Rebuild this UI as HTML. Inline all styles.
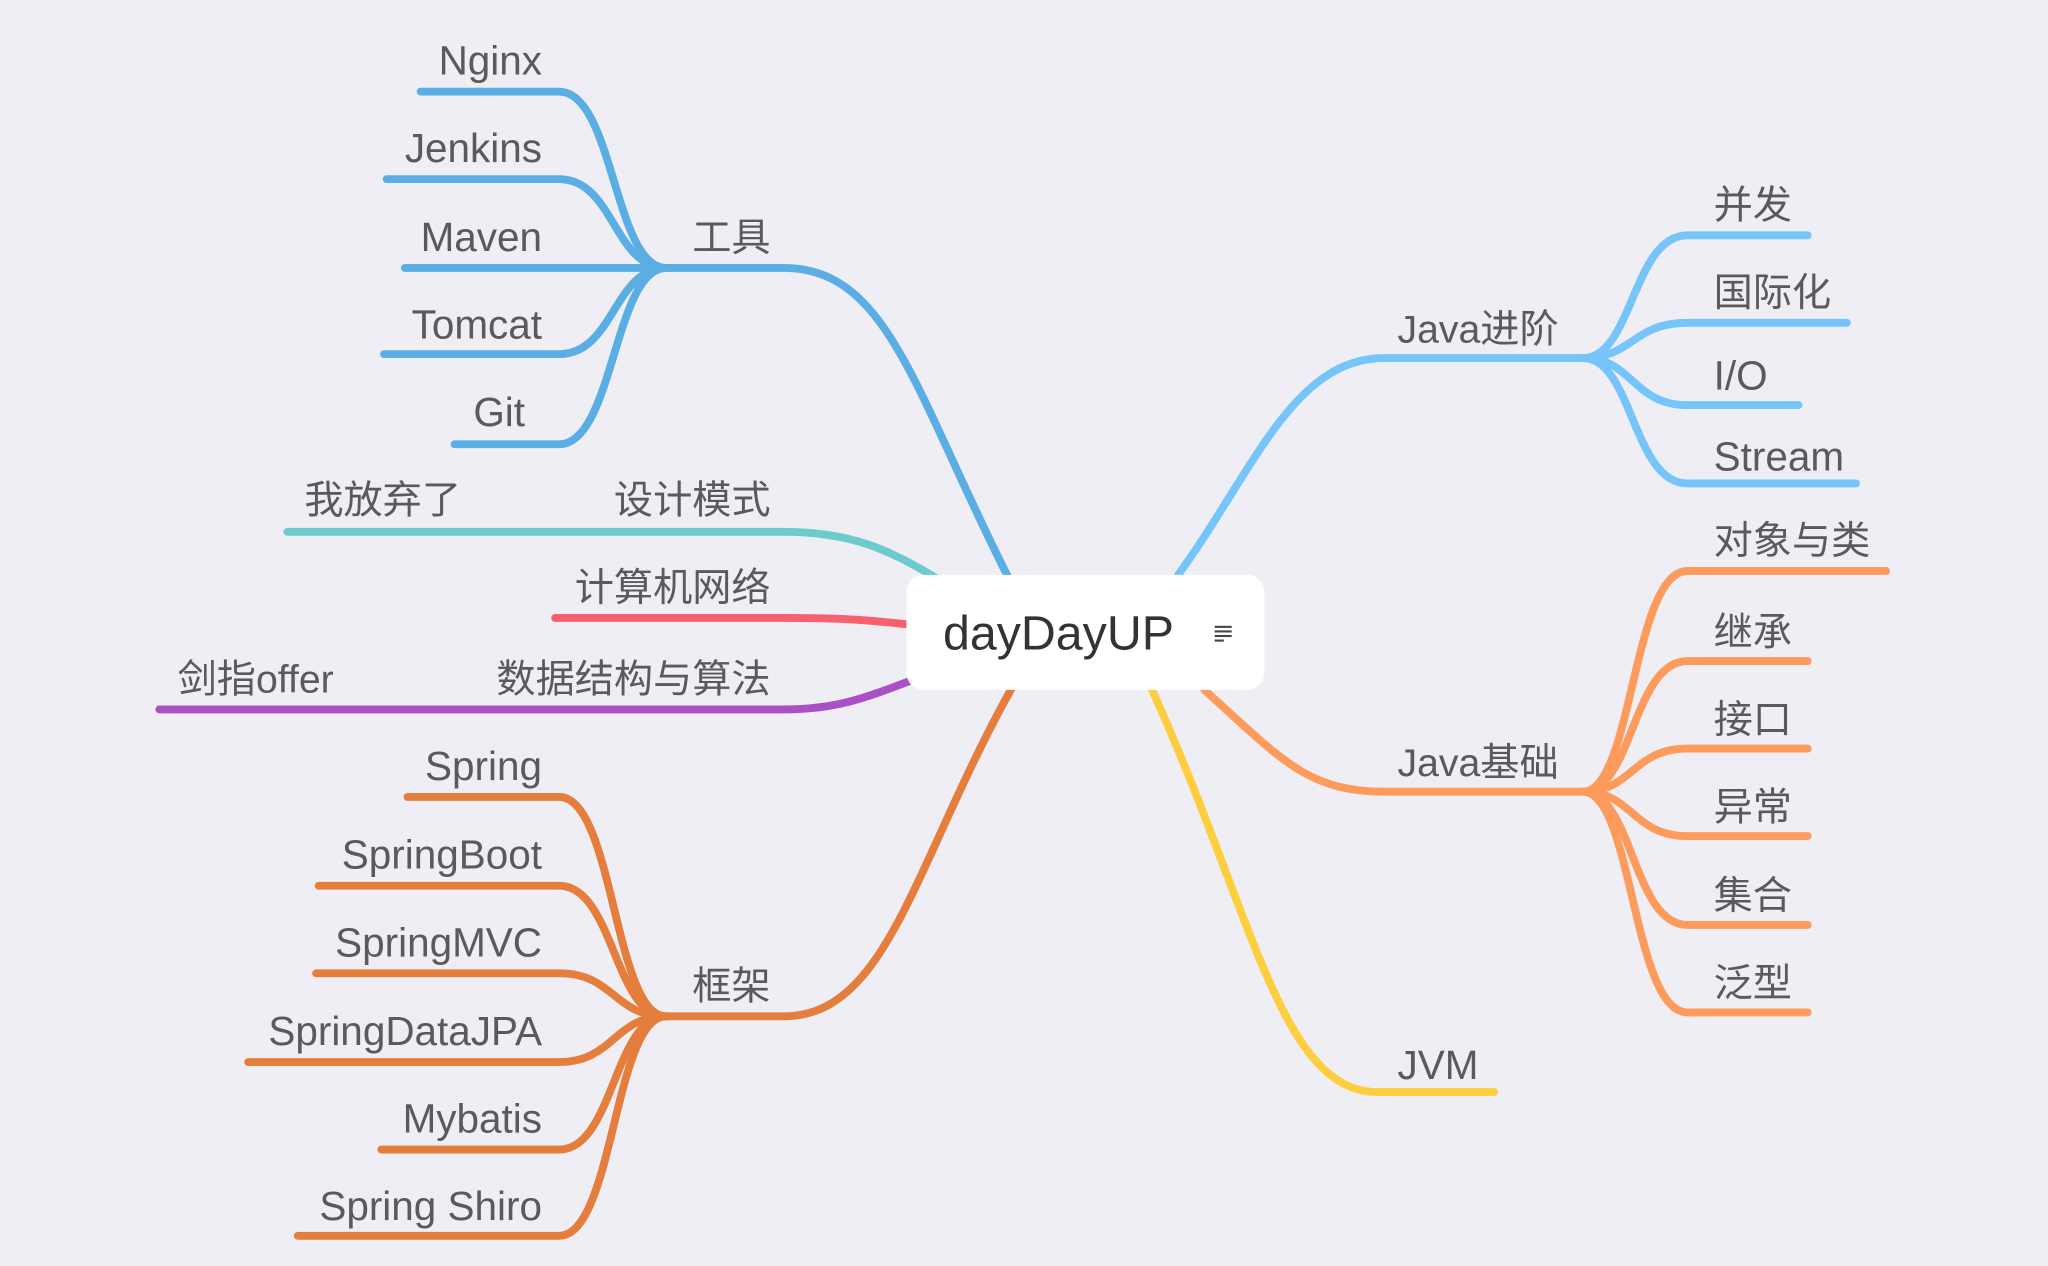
<!DOCTYPE html>
<html><head><meta charset="utf-8"><style>
html,body{margin:0;padding:0;background:#eeeef4;}
svg{display:block}
text{font-family:"Liberation Sans","Noto Sans CJK SC",sans-serif;fill:#5a5a5a;font-size:30px}
text.l{font-size:31px}
</style></head><body>
<svg width="2048" height="1266" viewBox="0 0 1568 969" xmlns="http://www.w3.org/2000/svg">
<rect width="1568" height="969" fill="#eeeef4"/>
<g fill="none" stroke-width="6" stroke-linecap="round">
<g stroke="#5aaee4">
<path d="M772 442 C700 300 680 205 600 205 L510 205"/>
<path d="M510 205 C470 205 470 70 428 70 L322 70"/>
<path d="M510 205 C470 205 470 137 428 137 L296 137"/>
<path d="M510 205 L310 205"/>
<path d="M510 205 C470 205 470 271 428 271 L294 271"/>
<path d="M510 205 C470 205 470 340 428 340 L348 340"/>
</g>
<path stroke="#6ccbcc" d="M716 442 C680 420 650 407 600 407 L220 407"/>
<path stroke="#f7616f" d="M696 478 C660 474 640 473 600 473 L425 473"/>
<path stroke="#a950c6" d="M700 520 C660 535 640 543 600 543 L122 543"/>
<g stroke="#e57d3c">
<path d="M775 526 C700 660 680 778 600 778 L510 778"/>
<path d="M510 778 C470 778 470 610 428 610 L312 610"/>
<path d="M510 778 C470 778 470 678 428 678 L244 678"/>
<path d="M510 778 C470 778 470 745 428 745 L242 745"/>
<path d="M510 778 C470 778 470 813 428 813 L190 813"/>
<path d="M510 778 C470 778 470 880 428 880 L292 880"/>
<path d="M510 778 C470 778 470 946 428 946 L228 946"/>
</g>
<g stroke="#75c5fa">
<path d="M902 440 C960 360 990 274 1060 274 L1212 274"/>
<path d="M1212 274 C1250 274 1250 180 1292 180 L1384 180"/>
<path d="M1212 274 C1250 274 1250 247 1292 247 L1414 247"/>
<path d="M1212 274 C1250 274 1250 310 1292 310 L1377 310"/>
<path d="M1212 274 C1250 274 1250 370 1292 370 L1421 370"/>
</g>
<g stroke="#fd9b5d">
<path d="M922 528 C980 580 1000 606 1060 606 L1212 606"/>
<path d="M1212 606 C1250 606 1250 437 1292 437 L1444 437"/>
<path d="M1212 606 C1250 606 1250 506 1292 506 L1384 506"/>
<path d="M1212 606 C1250 606 1250 573 1292 573 L1384 573"/>
<path d="M1212 606 C1250 606 1250 640 1292 640 L1384 640"/>
<path d="M1212 606 C1250 606 1250 708 1292 708 L1384 708"/>
<path d="M1212 606 C1250 606 1250 775 1292 775 L1384 775"/>
</g>
<path stroke="#fdce3e" d="M882 528 C960 700 980 836 1055 836 L1144 836"/>
</g>
<rect x="694" y="440" width="274" height="88" rx="13" fill="#fff"/>
<text x="722" y="497" style="font-size:37px;fill:#333">dayDayUP</text>
<g fill="#444"><rect x="930" y="479" width="13" height="1.6"/><rect x="930" y="482.5" width="13" height="1.6"/><rect x="930" y="486" width="13" height="1.6"/><rect x="930" y="489.5" width="7" height="1.6"/></g>
<g text-anchor="end">
<text class="l" x="415" y="57">Nginx</text>
<text class="l" x="415" y="124">Jenkins</text>
<text class="l" x="415" y="192">Maven</text>
<text class="l" x="415" y="259">Tomcat</text>
<text class="l" x="402" y="326">Git</text>
<text x="590" y="192">工具</text>
<text x="590" y="393">设计模式</text>
<text x="590" y="460">计算机网络</text>
<text x="590" y="530">数据结构与算法</text>
<text x="590" y="765">框架</text>
<text class="l" x="415" y="597">Spring</text>
<text class="l" x="415" y="665">SpringBoot</text>
<text class="l" x="415" y="732">SpringMVC</text>
<text class="l" x="415" y="800">SpringDataJPA</text>
<text class="l" x="415" y="867">Mybatis</text>
<text class="l" x="415" y="934">Spring Shiro</text>
</g>
<text x="233" y="393">我放弃了</text>
<text x="136" y="530">剑指offer</text>
<text x="1070" y="262">Java进阶</text>
<text x="1070" y="594">Java基础</text>
<text class="l" x="1070" y="826">JVM</text>
<text x="1312" y="167">并发</text>
<text x="1312" y="234">国际化</text>
<text class="l" x="1312" y="298">I/O</text>
<text class="l" x="1312" y="360">Stream</text>
<text x="1312" y="424">对象与类</text>
<text x="1312" y="494">继承</text>
<text x="1312" y="561">接口</text>
<text x="1312" y="628">异常</text>
<text x="1312" y="696">集合</text>
<text x="1312" y="763">泛型</text>
</svg>
</body></html>
